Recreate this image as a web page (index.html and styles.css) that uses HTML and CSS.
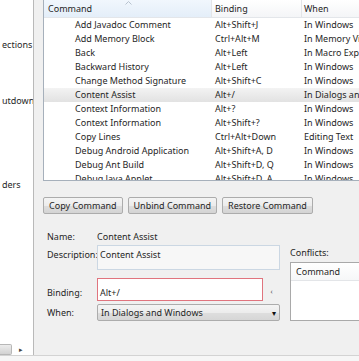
FILE: index.html
```html
<!DOCTYPE html>
<html lang="en">
  <head>
    <meta charset="UTF-8" />
    <title>Keys</title>
    <link rel="stylesheet" href="styles.css">
  </head>
  <body>
    <div class="window">
      <div class="main">
        <aside class="tree">
          <div class="tree-items">
            <div class="tree-item"></div>
            <div class="tree-item"></div>
            <div class="tree-item">ections</div>
            <div class="tree-item"></div>
            <div class="tree-item"></div>
            <div class="tree-item"></div>
            <div class="tree-item">utdown</div>
            <div class="tree-item"></div>
            <div class="tree-item"></div>
            <div class="tree-item"></div>
            <div class="tree-item"></div>
            <div class="tree-item"></div>
            <div class="tree-item">ders</div>
          </div>
          <div class="hscroll">
            <div class="hscroll-thumb"></div>
            <div class="hscroll-btn">▸</div>
          </div>
        </aside>

        <section class="keys">
          <div class="cmd-table">
            <div class="thead">
              <div class="th col-cmd sorted">
                Command
                <svg class="sort-arrow" width="7" height="4" viewBox="0 0 7 4"><polyline points="0.5,3.5 3.5,0.5 6.5,3.5" fill="none" stroke="#b8c3cf" stroke-width="1"/></svg>
              </div>
              <div class="th col-bind">Binding</div>
              <div class="th col-when">When</div>
            </div>
            <div class="tbody">
              <div class="tr"><div class="td col-cmd">Add Javadoc Comment</div><div class="td col-bind">Alt+Shift+J</div><div class="td col-when">In Windows</div></div>
              <div class="tr"><div class="td col-cmd">Add Memory Block</div><div class="td col-bind">Ctrl+Alt+M</div><div class="td col-when">In Memory View</div></div>
              <div class="tr"><div class="td col-cmd">Back</div><div class="td col-bind">Alt+Left</div><div class="td col-when">In Macro Expression</div></div>
              <div class="tr"><div class="td col-cmd">Backward History</div><div class="td col-bind">Alt+Left</div><div class="td col-when">In Windows</div></div>
              <div class="tr"><div class="td col-cmd">Change Method Signature</div><div class="td col-bind">Alt+Shift+C</div><div class="td col-when">In Windows</div></div>
              <div class="tr selected"><div class="td col-cmd">Content Assist</div><div class="td col-bind">Alt+/</div><div class="td col-when">In Dialogs and Windows</div></div>
              <div class="tr"><div class="td col-cmd">Context Information</div><div class="td col-bind">Alt+?</div><div class="td col-when">In Windows</div></div>
              <div class="tr"><div class="td col-cmd">Context Information</div><div class="td col-bind">Alt+Shift+?</div><div class="td col-when">In Windows</div></div>
              <div class="tr"><div class="td col-cmd">Copy Lines</div><div class="td col-bind">Ctrl+Alt+Down</div><div class="td col-when">Editing Text</div></div>
              <div class="tr"><div class="td col-cmd">Debug Android Application</div><div class="td col-bind">Alt+Shift+A, D</div><div class="td col-when">In Windows</div></div>
              <div class="tr"><div class="td col-cmd">Debug Ant Build</div><div class="td col-bind">Alt+Shift+D, Q</div><div class="td col-when">In Windows</div></div>
              <div class="tr"><div class="td col-cmd">Debug Java Applet</div><div class="td col-bind">Alt+Shift+D, A</div><div class="td col-when">In Windows</div></div>
            </div>
          </div>

          <div class="btn-row">
            <button class="btn">Copy Command</button>
            <button class="btn">Unbind Command</button>
            <button class="btn">Restore Command</button>
          </div>

          <div class="details">
            <div class="fields">
              <div class="field-row">
                <div class="label">Name:</div>
                <div class="value">Content Assist</div>
              </div>
              <div class="field-row desc-row">
                <div class="label">Description:</div>
                <div class="desc-box">Content Assist</div>
              </div>
              <div class="field-row binding-row">
                <div class="label">Binding:</div>
                <div class="binding-input">Alt+/</div>
                <div class="assist-mark">‹</div>
              </div>
              <div class="field-row when-row">
                <div class="label">When:</div>
                <div class="combo">
                  <span>In Dialogs and Windows</span>
                  <span class="combo-arrow">▾</span>
                </div>
              </div>
            </div>
            <div class="conflicts">
              <div class="conflicts-label">Conflicts:</div>
              <div class="conflicts-box">
                <div class="conflicts-head">Command</div>
              </div>
            </div>
          </div>
        </section>
      </div>
      <div class="statusline"></div>
    </div>
  </body>
</html>
```

FILE: styles.css
```css
* {
  margin: 0;
  padding: 0;
  box-sizing: border-box;
}
body {
  font-family: "Noto Sans", "Open Sans", sans-serif;
  font-size: 9px;
  color: #262626;
  background: #f0f0f0;
  width: 359px;
  height: 361px;
  overflow: hidden;
}
.window {
  display: flex;
  flex-direction: column;
  height: 100%;
}
.main {
  display: flex;
  height: 355px;
}

/* left tree, scrolled sideways */
.tree {
  width: 34px;
  flex: none;
  background: #fff;
  border-right: 1px solid #b9b9b9;
  display: flex;
  flex-direction: column;
  overflow: hidden;
}
.tree-items {
  flex: 1;
  padding-top: 10px;
}
.tree-item {
  height: 14px;
  line-height: 14px;
  white-space: nowrap;
  padding-left: 2px;
}
.hscroll {
  height: 11px;
  display: flex;
  align-items: stretch;
}
.hscroll-thumb {
  width: 12px;
  background: linear-gradient(#ececec, #d2d2d2);
  border: 1px solid #b7b7b7;
  border-left: none;
  border-radius: 0 2px 2px 0;
}
.hscroll-btn {
  width: 16px;
  margin-left: 1px;
  font-size: 7px;
  line-height: 11px;
  text-align: center;
  color: #444;
}

/* right side */
.keys {
  flex: 1;
  padding-left: 9px;
  overflow: hidden;
}
.cmd-table {
  width: 340px;
  height: 181px;
  background: #fff;
  border: 1px solid #a6b0bb;
  border-top: none;
  overflow: hidden;
}
.thead {
  display: flex;
  height: 18px;
  border-bottom: 1px solid #e3e6ea;
}
.th {
  line-height: 17px;
  position: relative;
  background: linear-gradient(#ffffff, #f4f5f7);
  border-right: 1px solid #e3e5e8;
}
.th.sorted {
  background: linear-gradient(#f1f7fd, #e4eef9);
}
.sort-arrow {
  position: absolute;
  top: 1px;
  left: 50%;
  margin-left: -3px;
}
.col-cmd {
  width: 168px;
  flex: none;
  padding-left: 31px;
}
.th.col-cmd {
  padding-left: 4px;
}
.col-bind {
  width: 90px;
  flex: none;
  padding-left: 3px;
}
.col-when {
  flex: 1;
  padding-left: 2px;
  white-space: nowrap;
  border-right: none;
}
.tr {
  display: flex;
  height: 14px;
  line-height: 14px;
  white-space: nowrap;
}
.tr.selected {
  background: linear-gradient(#f3f3f3, #e2e2e2);
}

.btn-row {
  display: flex;
  gap: 5px;
  margin-top: 16px;
}
.btn {
  font-family: inherit;
  font-size: 9px;
  color: #262626;
  height: 17px;
  padding: 0 5px;
  border: 1px solid #acacac;
  border-radius: 2px;
  background: linear-gradient(#f4f4f4 0%, #ececec 50%, #dedede 51%, #d4d4d4 100%);
}

.details {
  display: flex;
  margin-top: 16px;
}
.fields {
  width: 237px;
  flex: none;
  padding-left: 4px;
}
.field-row {
  display: flex;
  line-height: 14px;
}
.label {
  width: 50px;
  flex: none;
  white-space: nowrap;
}
.desc-row {
  margin-top: 1px;
}
.desc-row .label {
  padding-top: 3px;
}
.desc-box {
  width: 183px;
  height: 25px;
  padding: 2px 2px;
  background: #f7f7f7;
  border: 1px solid #cbd7e3;
}
.binding-row {
  margin-top: 8px;
}
.binding-row .label {
  padding-top: 8px;
}
.binding-input {
  width: 166px;
  height: 23px;
  padding: 7px 2px 0;
  background: #fff;
  border: 1px solid #e0747e;
}
.assist-mark {
  width: 17px;
  text-align: center;
  font-size: 7px;
  color: #555;
  padding-top: 7px;
}
.when-row {
  margin-top: 3px;
}
.when-row .label {
  line-height: 17px;
}
.combo {
  width: 183px;
  height: 17px;
  line-height: 15px;
  padding: 0 3px;
  display: flex;
  justify-content: space-between;
  border: 1px solid #acacac;
  border-radius: 2px;
  background: linear-gradient(#f4f4f4 0%, #ececec 50%, #dedede 51%, #d6d6d6 100%);
}
.combo-arrow {
  font-size: 8px;
  color: #111;
}

.conflicts {
  margin-left: 10px;
  padding-top: 16px;
  width: 120px;
  flex: none;
}
.conflicts-label {
  line-height: 14px;
}
.conflicts-box {
  margin-top: 2px;
  height: 59px;
  background: #fff;
  border: 1px solid #a9a9a9;
}
.conflicts-head {
  height: 18px;
  line-height: 17px;
  padding-left: 5px;
  border-bottom: 1px solid #e3e5e8;
  background: linear-gradient(#ffffff, #f6f7f8);
}

.statusline {
  flex: 1;
  border-top: 1px solid #d3d3d3;
  background: #f6f6f6;
}
```
